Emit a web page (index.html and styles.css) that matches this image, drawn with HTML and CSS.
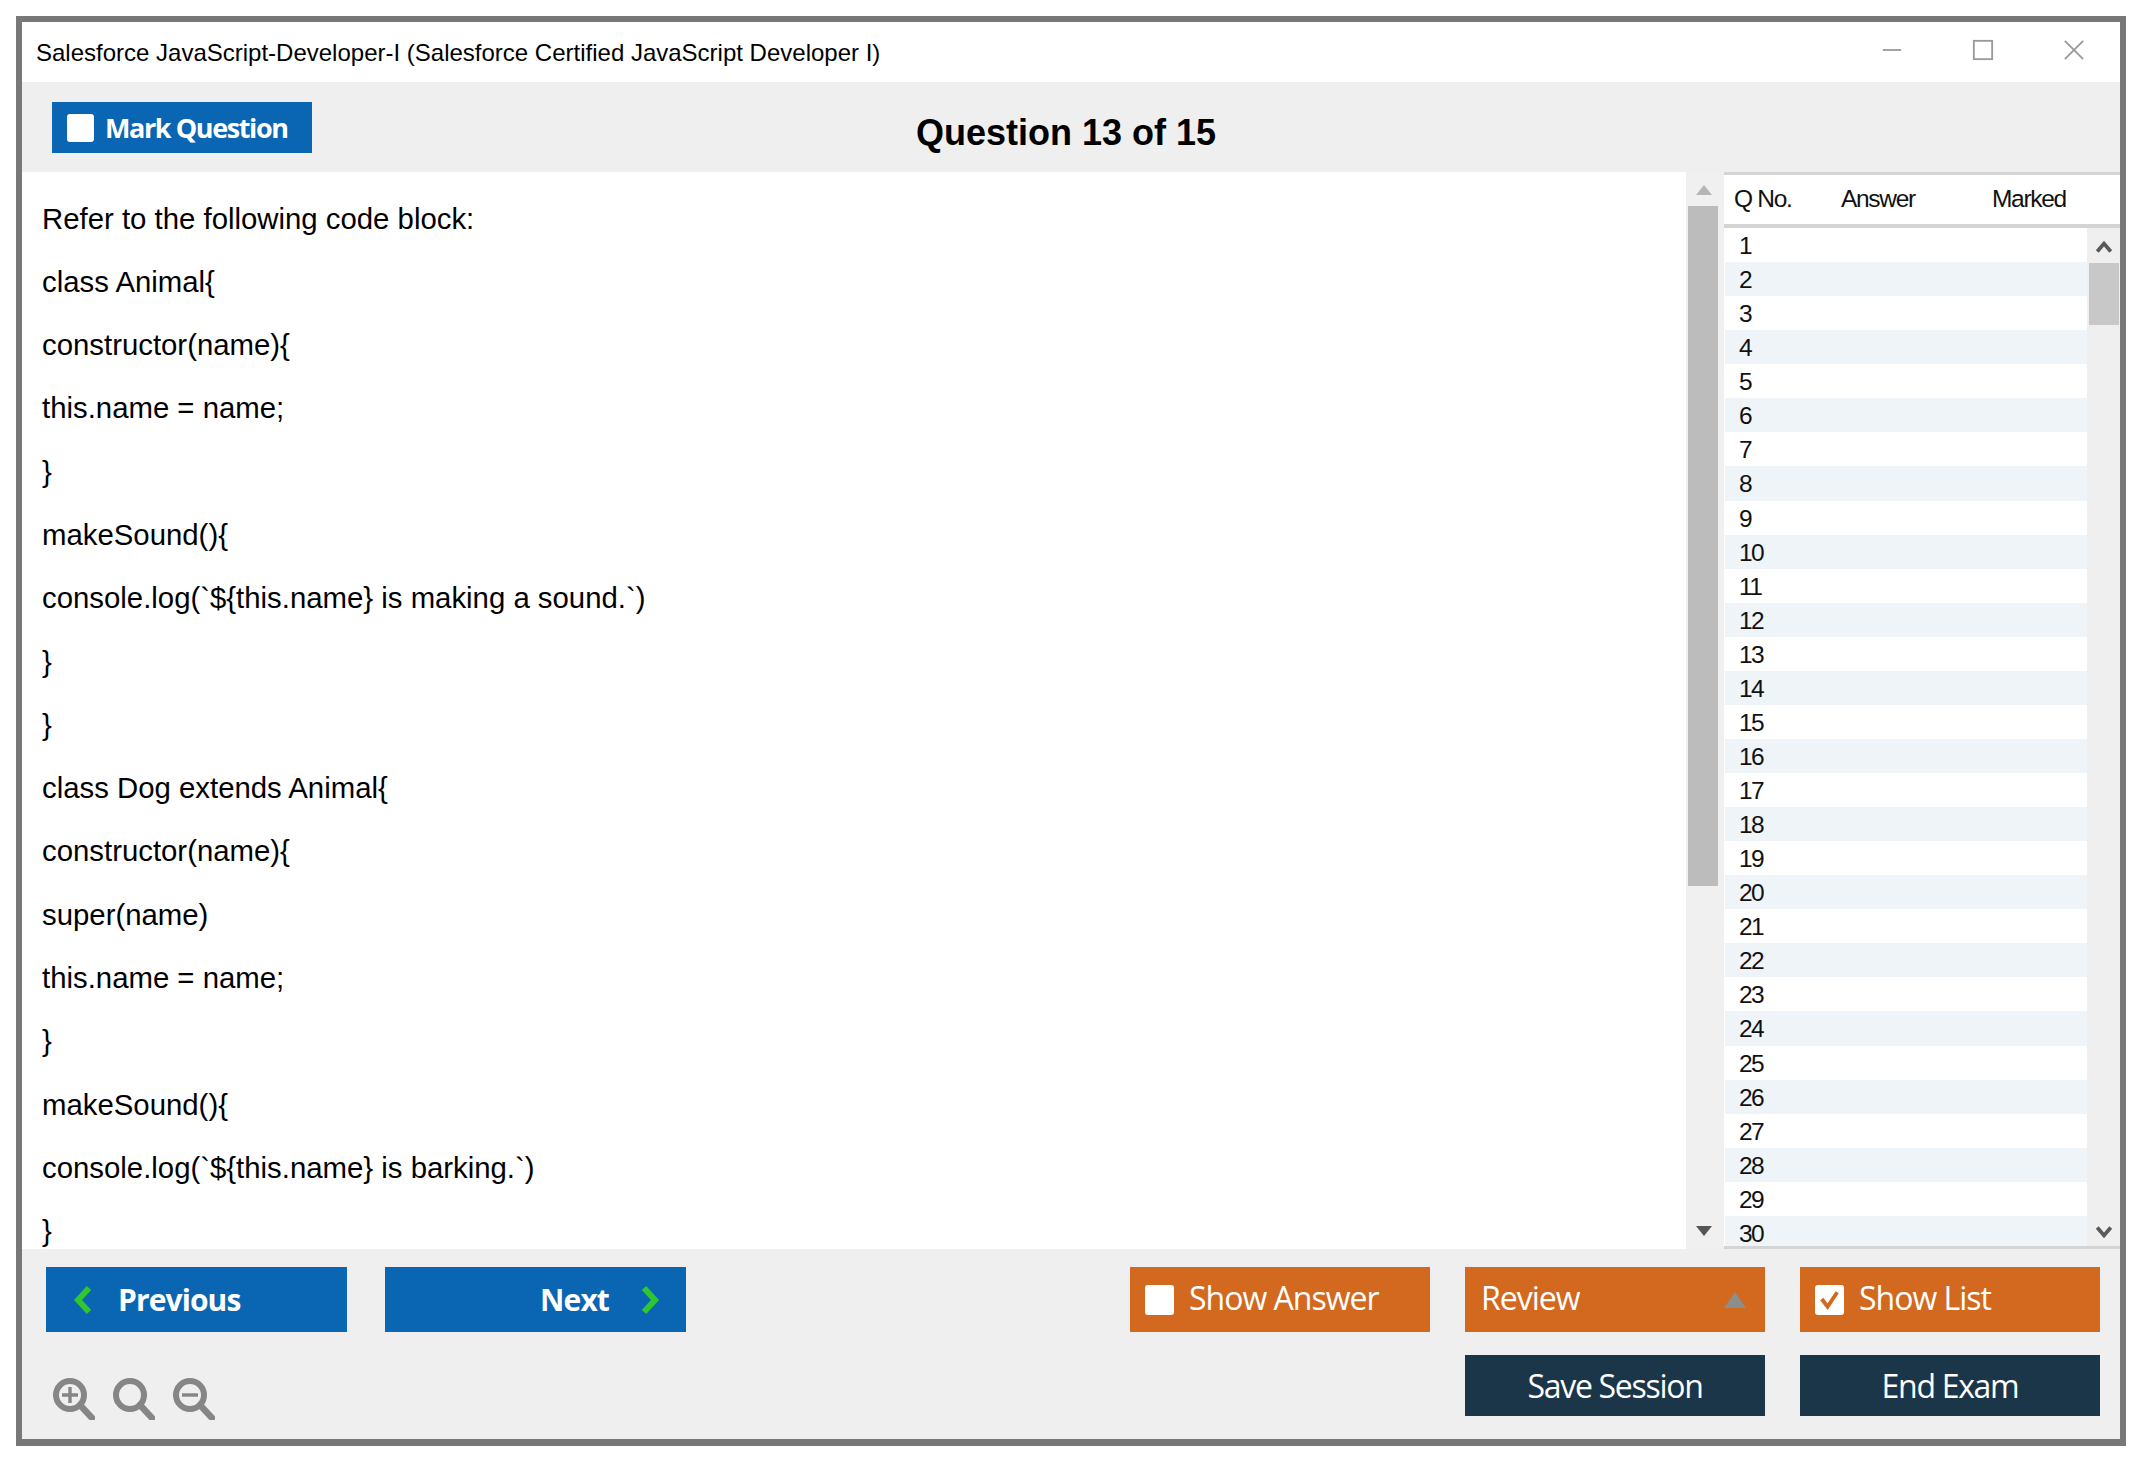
FILE: index.html
```html
<!DOCTYPE html>
<html lang="en">
<head>
<meta charset="utf-8">
<title>Question 13 of 15</title>
<link rel="stylesheet" href="styles.css">
</head>
<body>
<div class="window">
  <header class="titlebar">
    <span class="title">Salesforce JavaScript-Developer-I (Salesforce Certified JavaScript Developer I)</span>
    <div class="controls">
      <svg class="ctl" viewBox="0 0 24 24"><path d="M2 12H22" /></svg>
      <svg class="ctl" viewBox="0 0 24 24"><rect x="2" y="2" width="20" height="20" /></svg>
      <svg class="ctl" viewBox="0 0 24 24"><path d="M2 2L22 22M22 2L2 22" /></svg>
    </div>
  </header>
  <div class="toolbar">
    <button class="btn blue mark"><span class="box small"></span>Mark Question</button>
    <h1 class="heading">Question 13 of 15</h1>
  </div>
  <main class="middle">
    <section class="question">
      <p>Refer to the following code block:</p>
      <p>class Animal{</p>
      <p>constructor(name){</p>
      <p>this.name = name;</p>
      <p>}</p>
      <p>makeSound(){</p>
      <p>console.log(`${this.name} is making a sound.`)</p>
      <p>}</p>
      <p>}</p>
      <p>class Dog extends Animal{</p>
      <p>constructor(name){</p>
      <p>super(name)</p>
      <p>this.name = name;</p>
      <p>}</p>
      <p>makeSound(){</p>
      <p>console.log(`${this.name} is barking.`)</p>
      <p>}</p>
    </section>
    <div class="vscroll">
      <svg class="tri up" viewBox="0 0 16 10"><path d="M8 0L16 10H0Z" /></svg>
      <div class="vthumb"></div>
      <svg class="tri down" viewBox="0 0 16 10"><path d="M0 0H16L8 10Z" /></svg>
    </div>
    <aside class="list">
      <div class="listhead"><span class="c1">Q No.</span><span class="c2">Answer</span><span class="c3">Marked</span></div>
      <div class="listbody">
        <div class="rows">
          <div class="row">1</div><div class="row">2</div><div class="row">3</div><div class="row">4</div><div class="row">5</div>
          <div class="row">6</div><div class="row">7</div><div class="row">8</div><div class="row">9</div><div class="row">10</div>
          <div class="row">11</div><div class="row">12</div><div class="row">13</div><div class="row">14</div><div class="row">15</div>
          <div class="row">16</div><div class="row">17</div><div class="row">18</div><div class="row">19</div><div class="row">20</div>
          <div class="row">21</div><div class="row">22</div><div class="row">23</div><div class="row">24</div><div class="row">25</div>
          <div class="row">26</div><div class="row">27</div><div class="row">28</div><div class="row">29</div><div class="row">30</div>
        </div>
        <div class="lscroll">
          <svg class="chev" viewBox="0 0 16 12"><path d="M2 10L8 3L14 10" /></svg>
          <div class="lthumb"></div>
          <svg class="chev" viewBox="0 0 16 12"><path d="M2 2L8 9L14 2" /></svg>
        </div>
      </div>
    </aside>
  </main>
  <footer class="bottom">
    <div class="leftside">
      <div class="nav">
        <button class="btn blue navbtn prev">
          <svg class="arrow" viewBox="0 0 20 30"><path d="M16 3L5 15L16 27" /></svg>
          Previous
        </button>
        <button class="btn blue navbtn next">
          Next
          <svg class="arrow" viewBox="0 0 20 30"><path d="M4 3L15 15L4 27" /></svg>
        </button>
      </div>
      <div class="zooms">
        <svg class="zoom" viewBox="0 0 42 42"><circle cx="17" cy="17" r="14" /><path class="handle" d="M27 27L39 40" /><path class="sign" d="M9 17H25M17 9V25" /></svg>
        <svg class="zoom" viewBox="0 0 42 42"><circle cx="17" cy="17" r="14" /><path class="handle" d="M27 27L39 40" /></svg>
        <svg class="zoom" viewBox="0 0 42 42"><circle cx="17" cy="17" r="14" /><path class="handle" d="M27 27L39 40" /><path class="sign" d="M9 17H25" /></svg>
      </div>
    </div>
    <div class="actions">
      <button class="btn orange action"><span class="box"></span><span class="lbl">Show Answer</span></button>
      <button class="btn orange action review"><span class="lbl">Review</span><svg class="revtri" viewBox="0 0 22 16"><path d="M11 0L22 16H0Z" /></svg></button>
      <button class="btn orange action"><span class="box"><svg class="tick" viewBox="0 0 30 30"><path d="M7 14L13 22L23 7" /></svg></span><span class="lbl">Show List</span></button>
      <button class="btn navy session skip">Save Session</button>
      <button class="btn navy session">End Exam</button>
    </div>
  </footer>
</div>
</body>
</html>
```

FILE: styles.css
```css
* { box-sizing: border-box; }
html, body { margin: 0; padding: 0; background: #fff; }
body { padding: 16px 0 0 16px; font-family: "Liberation Sans", Arial, sans-serif; color: #000; }

.window {
  width: 2110px;
  height: 1430px;
  border: 6px solid #787878;
  border-bottom-width: 7px;
  background: #fff;
  display: flex;
  flex-direction: column;
  overflow: hidden;
}

.titlebar { height: 60px; flex: none; display: flex; align-items: center; justify-content: space-between; padding: 2px 35px 0 14px; }
.title { font-size: 24px; }
.controls { display: flex; gap: 69px; align-items: center; margin-bottom: 6px; }
.ctl { width: 22px; height: 22px; fill: none; stroke: #9a9a9a; stroke-width: 2; }

.toolbar { height: 90px; flex: none; background: #efefef; display: flex; align-items: flex-start; position: relative; padding: 20px 0 0 30px; }
.heading { position: absolute; left: 894px; top: 28px; margin: 0; font-size: 36px; font-weight: 700; line-height: 46px; white-space: nowrap; }

.btn { border: 0; margin: 0; padding: 0; color: #fff; font-family: "Open Sans", sans-serif; display: flex; align-items: center; }
.blue { background: #0a66b3; }
.orange { background: #d2691e; }
.navy { background: #1b3549; }

.mark { width: 260px; height: 51px; padding-left: 15px; font-size: 27px; font-weight: 700; letter-spacing: -1.4px; }
.box { width: 29px; height: 30px; background: #fff; border-radius: 3px; flex: none; display: block; }
.box.small { width: 27px; height: 28px; margin-right: 11px; }

.middle { height: 1077px; flex: none; display: flex; overflow: hidden; }
.question { flex: 1; min-width: 0; padding: 24.5px 0 0 20px; overflow: hidden; }
.question p { margin: 0; height: 63.3px; font-size: 29.35px; line-height: 44px; white-space: nowrap; }

.vscroll { width: 38px; flex: none; background: #f0f0f0; display: flex; flex-direction: column; align-items: center; }
.tri { width: 16px; height: 10px; flex: none; margin-right: 3px; }
.tri.up { fill: #b5b5b5; margin-top: 13px; margin-bottom: 11px; }
.tri.down { fill: #555; margin-top: 5px; }
.vthumb { width: 30px; height: 680px; background: #bcbcbc; margin-right: 4px; margin-bottom: 335px; }

.list { width: 396px; flex: none; display: flex; flex-direction: column; }
.listhead { height: 56px; flex: none; border-top: 3px solid #d4d4d4; border-bottom: 4px solid #d4d4d4; background: #fff; display: flex; align-items: center; font-size: 24.5px; letter-spacing: -1.3px; color: #111; padding-bottom: 2px; }
.c1 { margin-left: 10px; width: 107px; }
.c2 { width: 151px; }
.listbody { flex: 1; display: flex; min-height: 0; border-bottom: 3px solid #d4d4d4; }
.rows { width: 363px; flex: none; padding-left: 1px; }
.row { height: 34.07px; padding: 9px 0 0 14px; font-size: 24.5px; line-height: 18px; letter-spacing: -1.6px; color: #111; }
.row:nth-child(even) { background: #eff4f8; }
.row:last-child { height: 30px; }
.lscroll { flex: 1; background: #efefef; display: flex; flex-direction: column; align-items: center; }
.chev { width: 18px; height: 14px; flex: none; fill: none; stroke: #5a5a5a; stroke-width: 3.4; margin: 12px 0 9px 0; }
.lthumb { width: 30px; height: 62px; flex: none; background: #c8c8c8; margin: 0 0 888px 0; }

.bottom { flex: 1; background: #efefef; display: flex; justify-content: space-between; padding: 18px 20px 0 24px; }
.leftside { display: flex; flex-direction: column; }
.nav { display: flex; gap: 38px; }
.navbtn { width: 301px; height: 65px; font-size: 30px; font-weight: 700; letter-spacing: -0.9px; }
.prev { padding-left: 27px; gap: 25px; }
.next { justify-content: flex-end; padding-right: 26px; gap: 31px; }
.arrow { width: 20px; height: 30px; fill: none; stroke: #2fc62f; stroke-width: 6; flex: none; }
.zooms { display: flex; gap: 18px; margin-top: 46px; margin-left: 7px; }
.zoom { width: 42px; height: 42px; fill: none; stroke: #868686; stroke-width: 6; }
.zoom .handle { stroke-width: 6.5; stroke-linecap: round; }
.zoom .sign { stroke-width: 3.4; }

.actions { display: grid; grid-template-columns: 300px 300px 300px; column-gap: 35px; row-gap: 23px; align-content: start; }
.action { height: 65px; font-size: 32px; letter-spacing: -1px; padding-left: 15px; gap: 15px; }
.lbl { position: relative; top: -2px; }
.review { justify-content: space-between; padding-left: 16px; padding-right: 19px; }
.revtri { width: 22px; height: 16px; fill: #8d8d8d; flex: none; }
.tick { display: block; width: 29px; height: 30px; fill: none; stroke: #d2691e; stroke-width: 4; }
.session { height: 61px; font-size: 32px; letter-spacing: -1.3px; justify-content: center; }
.skip { grid-column: 2; }
```
